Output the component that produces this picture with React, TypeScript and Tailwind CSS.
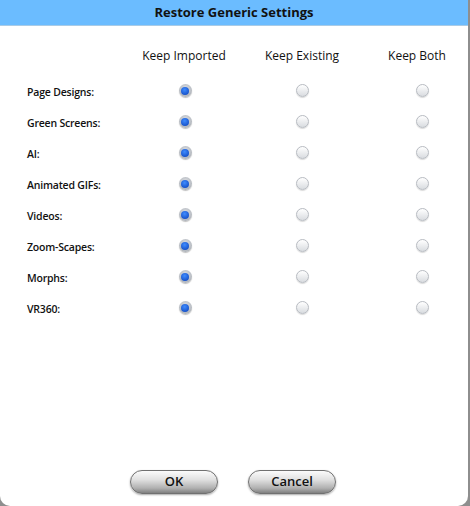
const rows = [
  "Page Designs:",
  "Green Screens:",
  "AI:",
  "Animated GIFs:",
  "Videos:",
  "Zoom-Scapes:",
  "Morphs:",
  "VR360:",
];

function Radio({ checked }: { checked?: boolean }) {
  if (checked) {
    return (
      <span className="flex h-[13px] w-[13px] items-center justify-center rounded-full bg-[radial-gradient(circle_at_50%_40%,#e4e6ea,#9aa0a8)] shadow-[0_1px_1px_rgba(0,0,0,0.25)]">
        <span className="h-[8px] w-[8px] rounded-full bg-[radial-gradient(circle_at_45%_35%,#3f8cff,#0a3fb8)]" />
      </span>
    );
  }
  return (
    <span className="block h-[13px] w-[13px] rounded-full border border-[#b8bcc2] bg-[linear-gradient(#ffffff,#d9dce0)] shadow-[0_1px_1px_rgba(0,0,0,0.15)]" />
  );
}

function Button({ label }: { label: string }) {
  return (
    <button className="flex h-[24px] w-[88px] items-center justify-center rounded-full border border-[#707070] bg-[linear-gradient(#fbfbfb_0%,#e0e0e0_40%,#b0b0b0_78%,#808080_100%)] text-[13px] font-semibold text-[#111] shadow-[0_1px_2px_rgba(0,0,0,0.35)]">
      {label}
    </button>
  );
}

export default function App() {
  return (
    <div
      className="h-[506px] w-[470px] bg-[#8e8e8e]"
      style={{ fontFamily: '"Open Sans", "Liberation Sans", sans-serif' }}
    >
      <div className="flex h-[506px] w-[468px] flex-col rounded-b-[10px] bg-white">
        <div className="flex h-[26px] items-center justify-center border-b border-[#a9cbe6] bg-[#6bbcff] text-[13px] font-bold text-[#111]">
          Restore Generic Settings
        </div>
        <div className="grid grid-cols-[125px_118px_118px_118px] pt-[21px] text-[12px] font-medium text-[#111]">
          <div />
          <div className="text-center">Keep Imported</div>
          <div className="text-center">Keep Existing</div>
          <div className="pr-[6px] text-center">Keep Both</div>
        </div>
        <div className="mt-[12px] flex flex-col">
          {rows.map((r) => (
            <div
              key={r}
              className="grid h-[31px] grid-cols-[125px_118px_118px_118px] items-center"
            >
              <div className="pl-[27px] text-[10.5px] font-semibold tracking-[-0.2px] text-[#111]">
                {r}
              </div>
              <div className="-mt-[4px] flex justify-center pl-[2px]">
                <Radio checked />
              </div>
              <div className="-mt-[4px] flex justify-center">
                <Radio />
              </div>
              <div className="-mt-[4px] flex justify-center pl-[4px]">
                <Radio />
              </div>
            </div>
          ))}
        </div>
        <div className="mt-auto mb-[12px] flex justify-center gap-[30px] pr-[2px]">
          <Button label="OK" />
          <Button label="Cancel" />
        </div>
      </div>
    </div>
  );
}
